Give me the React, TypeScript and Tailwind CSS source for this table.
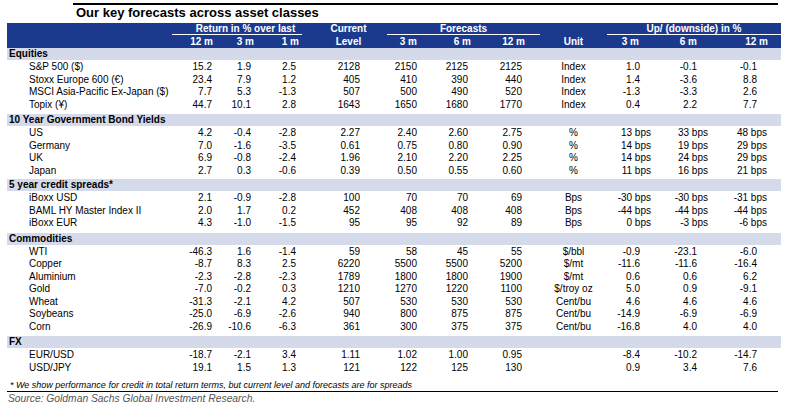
import React from "react";

type Row = [string, ...string[]];
type Section = { title: string; rows: Row[]; pb: string };

const sections: Section[] = [
  {
    title: "Equities",
    pb: "pb-[3px]",
    rows: [
      ["S&P 500 ($)", "15.2", "1.9", "2.5", "2128", "2150", "2125", "2125", "Index", "1.0", "-0.1", "-0.1"],
      ["Stoxx Europe 600 (€)", "23.4", "7.9", "1.2", "405", "410", "390", "440", "Index", "1.4", "-3.6", "8.8"],
      ["MSCI Asia-Pacific Ex-Japan ($)", "7.7", "5.3", "-1.3", "507", "500", "490", "520", "Index", "-1.3", "-3.3", "2.6"],
      ["Topix (¥)", "44.7", "10.1", "2.8", "1643", "1650", "1680", "1770", "Index", "0.4", "2.2", "7.7"],
    ],
  },
  {
    title: "10 Year Government Bond Yields",
    pb: "pb-[2px]",
    rows: [
      ["US", "4.2", "-0.4", "-2.8", "2.27", "2.40", "2.60", "2.75", "%", "13 bps", "33 bps", "48 bps"],
      ["Germany", "7.0", "-1.6", "-3.5", "0.61", "0.75", "0.80", "0.90", "%", "14 bps", "19 bps", "29 bps"],
      ["UK", "6.9", "-0.8", "-2.4", "1.96", "2.10", "2.20", "2.25", "%", "14 bps", "24 bps", "29 bps"],
      ["Japan", "2.7", "0.3", "-0.6", "0.39", "0.50", "0.55", "0.60", "%", "11 bps", "16 bps", "21 bps"],
    ],
  },
  {
    title: "5 year credit spreads*",
    pb: "pb-[3px]",
    rows: [
      ["iBoxx USD", "2.1", "-0.9", "-2.8", "100", "70", "70", "69", "Bps", "-30 bps", "-30 bps", "-31 bps"],
      ["BAML HY Master Index II", "2.0", "1.7", "0.2", "452", "408", "408", "408", "Bps", "-44 bps", "-44 bps", "-44 bps"],
      ["iBoxx EUR", "4.3", "-1.0", "-1.5", "95", "95", "92", "89", "Bps", "0 bps", "-3 bps", "-6 bps"],
    ],
  },
  {
    title: "Commodities",
    pb: "pb-[3px]",
    rows: [
      ["WTI", "-46.3", "1.6", "-1.4", "59", "58", "45", "55", "$/bbl", "-0.9", "-23.1", "-6.0"],
      ["Copper", "-8.7", "8.3", "2.5", "6220", "5500", "5500", "5200", "$/mt", "-11.6", "-11.6", "-16.4"],
      ["Aluminium", "-2.3", "-2.8", "-2.3", "1789", "1800", "1800", "1900", "$/mt", "0.6", "0.6", "6.2"],
      ["Gold", "-7.0", "-0.2", "0.3", "1210", "1270", "1220", "1100", "$/troy oz", "5.0", "0.9", "-9.1"],
      ["Wheat", "-31.3", "-2.1", "4.2", "507", "530", "530", "530", "Cent/bu", "4.6", "4.6", "4.6"],
      ["Soybeans", "-25.0", "-6.9", "-2.6", "940", "800", "875", "875", "Cent/bu", "-14.9", "-6.9", "-6.9"],
      ["Corn", "-26.9", "-10.6", "-6.3", "361", "300", "375", "375", "Cent/bu", "-16.8", "4.0", "4.0"],
    ],
  },
  {
    title: "FX",
    pb: "pb-[0px]",
    rows: [
      ["EUR/USD", "-18.7", "-2.1", "3.4", "1.11", "1.02", "1.00", "0.95", "", "-8.4", "-10.2", "-14.7"],
      ["USD/JPY", "19.1", "1.5", "1.3", "121", "122", "125", "130", "", "0.9", "3.4", "7.6"],
    ],
  },
];

const GRID =
  "grid grid-cols-[165px_46px_40px_44px_85px_35px_52px_66px_67px_53px_58px_63px]";

const numPad = [
  "pr-[6px]",
  "pr-[7px]",
  "pr-[6px]",
  "pr-[27px]",
  "pr-[5px]",
  "pr-[6px]",
  "pr-[18px]",
  "",
  "pr-[20px]",
  "pr-[21px]",
  "pr-[24px]",
];
const bpsPad = ["pr-[9px]", "pr-[10px]", "pr-[14px]"];

function Cell({ v, i }: { v: string; i: number }) {
  if (i === 7) {
    return <div className="text-center whitespace-nowrap">{v}</div>;
  }
  const isBps = v.includes("bps");
  const pad = isBps && i >= 8 ? bpsPad[i - 8] : numPad[i];
  return <div className={`text-right whitespace-nowrap ${pad}`}>{v}</div>;
}

export default function App() {
  return (
    <div className="w-[795px] h-[414px] bg-white text-black font-['Liberation_Sans',Arial,sans-serif] overflow-hidden">
      {/* Title area */}
      <div className="h-[23px] pt-[3px]">
        <div className="ml-[73px] w-[705px] h-[1.5px] bg-black" />
        <div className="pl-[76px] text-[13px] font-bold leading-[16px] mt-[0px]">
          Our key forecasts across asset classes
        </div>
      </div>

      <div className="ml-[7px] w-[774px]">
        {/* Header */}
        <div
          className={`${GRID} grid-rows-[12px_13px] bg-[#1b3a8e] text-white text-[10px] font-bold leading-[12px]`}
        >
          <div />
          <div className="col-span-3 border-b border-white text-center pl-[17px] leading-[11px]">
            Return in % over last
          </div>
          <div className="text-center pl-[8px] leading-[12px]">Current</div>
          <div className="col-span-3 border-b border-white text-center leading-[11px]">
            Forecasts
          </div>
          <div />
          <div className="col-span-3 border-b border-white text-center leading-[11px]">
            Up/ (downside) in %
          </div>

          <div />
          <div className="text-right pr-[5px] leading-[13px]">12 m</div>
          <div className="text-right pr-[4px] leading-[13px]">3 m</div>
          <div className="text-right pr-[3px] leading-[13px]">1 m</div>
          <div className="text-center pl-[8px] leading-[13px]">Level</div>
          <div className="text-right pr-[5px] leading-[13px]">3 m</div>
          <div className="text-right pr-[3px] leading-[13px]">6 m</div>
          <div className="text-right pr-[15px] leading-[13px]">12 m</div>
          <div className="text-center leading-[13px]">Unit</div>
          <div className="text-right pr-[21px] leading-[13px]">3 m</div>
          <div className="text-right pr-[21px] leading-[13px]">6 m</div>
          <div className="text-right pr-[13px] leading-[13px]">12 m</div>
        </div>

        {/* Sections */}
        {sections.map((s) => (
          <div key={s.title} className={s.pb}>
            <div className="h-[12px] bg-[#d4daea] pl-[2px] text-[10px] font-bold leading-[12px]">
              {s.title}
            </div>
            <div className="pt-[1px] text-[10px]">
              {s.rows.map((r) => (
                <div key={r[0]} className={`${GRID} h-[12.5px] leading-[12.5px]`}>
                  <div className="pl-[22px] whitespace-nowrap">{r[0]}</div>
                  {r.slice(1).map((v, i) => (
                    <Cell key={i} v={v} i={i} />
                  ))}
                </div>
              ))}
            </div>
          </div>
        ))}
      </div>

      {/* Footnote */}
      <div className="ml-[7px] w-[771px] mt-[5px] border-b border-black h-[13px] pl-[3px] text-[9px] italic leading-[12px] whitespace-nowrap">
        * We show performance for credit in total return terms, but current level and forecasts are for spreads
      </div>
      <div className="pl-[8px] mt-[1px] text-[10.3px] italic leading-[12px] text-[#555] whitespace-nowrap">
        Source: Goldman Sachs Global Investment Research.
      </div>
    </div>
  );
}
